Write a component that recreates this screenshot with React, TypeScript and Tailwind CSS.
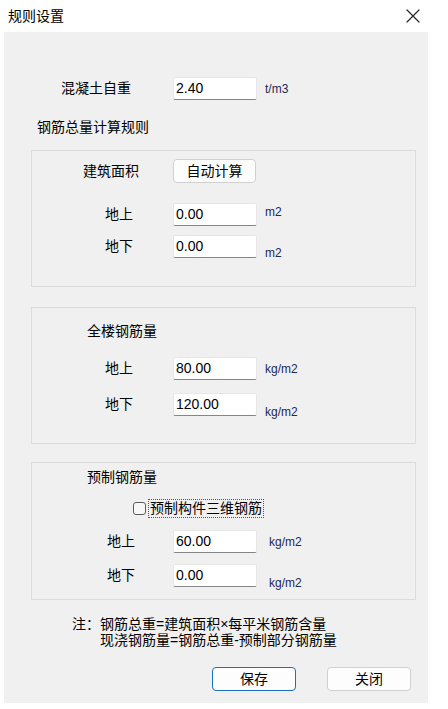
import { X } from "lucide-react";

const FONT = "font-['Liberation_Sans','Noto_Sans_CJK_SC',sans-serif]";

const Field = ({ value }: { value: string }) => (
  <div className="w-[84px] h-[23px] bg-white border border-[#e6e6e6] border-b-[#868686] rounded-[2px] pl-[2px] flex items-center text-[14px] text-black">
    {value}
  </div>
);

const Row = ({
  pl,
  labelW,
  label,
  value,
  unit,
  unitTop,
  unitGap = "ml-[8px]",
  mt,
}: {
  pl: string;
  labelW: string;
  label: string;
  value: string;
  unit: string;
  unitTop: string;
  unitGap?: string;
  mt: string;
}) => (
  <div className={`flex items-start ${pl} ${mt}`}>
    <div className={`${labelW} h-[23px] flex items-center text-[14px] text-black`}>{label}</div>
    <Field value={value} />
    <div className={`${unitGap} ${unitTop} text-[12px] leading-[14px] text-[#22285a]`}>{unit}</div>
  </div>
);

export default function App() {
  return (
    <div className={`w-[448px] h-[709px] bg-white flex flex-col ${FONT}`}>
      {/* 标题栏 */}
      <div className="h-[32px] flex items-center justify-between pl-[8px] pr-[23px] shrink-0">
        <span className="text-[14px] text-black">规则设置</span>
        <X size={24} strokeWidth={1.2} className="text-[#2b2b2b]" />
      </div>

      <div className="ml-[4px] w-[424px] h-[671px] bg-[#f0f0f0] flex flex-col">
        <Row pl="pl-[57px]" labelW="w-[112px]" label="混凝土自重" value="2.40" unit="t/m3" unitTop="mt-[5px]" mt="mt-[45px]" />

        <div className="ml-[33px] mt-[17px] h-[20px] flex items-center text-[14px] text-black">钢筋总量计算规则</div>

        {/* 建筑面积 */}
        <div className="ml-[27px] mt-[13px] w-[385px] h-[137px] border border-[#dcdcdc] flex flex-col">
          <div className="flex items-center pl-[51px] mt-[8px]">
            <div className="w-[90px] text-[14px] text-black">建筑面积</div>
            <div className="w-[83px] h-[24px] bg-[#fdfdfd] border border-[#d0d0d0] rounded-[4px] flex items-center justify-center text-[14px] text-black">
              自动计算
            </div>
          </div>
          <Row pl="pl-[73px]" labelW="w-[68px]" label="地上" value="0.00" unit="m2" unitTop="mt-[2px]" mt="mt-[20px]" />
          <Row pl="pl-[73px]" labelW="w-[68px]" label="地下" value="0.00" unit="m2" unitTop="mt-[11px]" mt="mt-[9px]" />
        </div>

        {/* 全楼钢筋量 */}
        <div className="ml-[27px] mt-[20px] w-[385px] h-[137px] border border-[#dcdcdc] flex flex-col">
          <div className="pl-[55px] mt-[13px] h-[20px] flex items-center text-[14px] text-black">全楼钢筋量</div>
          <Row pl="pl-[73px]" labelW="w-[68px]" label="地上" value="80.00" unit="kg/m2" unitTop="mt-[5px]" mt="mt-[16px]" />
          <Row pl="pl-[73px]" labelW="w-[68px]" label="地下" value="120.00" unit="kg/m2" unitTop="mt-[12px]" mt="mt-[13px]" />
        </div>

        {/* 预制钢筋量 */}
        <div className="ml-[27px] mt-[18px] w-[385px] h-[138px] border border-[#dcdcdc] flex flex-col">
          <div className="pl-[55px] mt-[4px] h-[20px] flex items-center text-[14px] text-black">预制钢筋量</div>
          <div className="flex items-center pl-[101px] mt-[11px] h-[20px]">
            <div className="w-[13px] h-[13px] rounded-[3px] border border-[#5c5c5c] bg-[#f7f7f7]" />
            <div className="ml-[2px] px-[1px] border border-dotted border-[#555] text-[14px] leading-[17px] text-black">预制构件三维钢筋</div>
          </div>
          <Row pl="pl-[75px]" labelW="w-[66px]" label="地上" value="60.00" unit="kg/m2" unitTop="mt-[5px]" unitGap="ml-[12px]" mt="mt-[12px]" />
          <Row pl="pl-[75px]" labelW="w-[66px]" label="地下" value="0.00" unit="kg/m2" unitTop="mt-[12px]" unitGap="ml-[12px]" mt="mt-[11px]" />
        </div>

        {/* 注释 */}
        <div className="mt-[16px] pl-[68px] text-[14px] leading-[16px] text-black">
          <div>注：钢筋总重=建筑面积×每平米钢筋含量</div>
          <div className="pl-[28px]">现浇钢筋量=钢筋总重-预制部分钢筋量</div>
        </div>

        <div className="mt-[19px] flex justify-end gap-[31px] pr-[17px]">
          <div className="w-[84px] h-[24px] bg-[#fdfdfd] border border-[#1c6fc4] rounded-[4px] flex items-center justify-center text-[14px] text-black">
            保存
          </div>
          <div className="w-[84px] h-[24px] bg-[#fdfdfd] border border-[#d0d0d0] rounded-[4px] flex items-center justify-center text-[14px] text-black">
            关闭
          </div>
        </div>
      </div>
    </div>
  );
}
